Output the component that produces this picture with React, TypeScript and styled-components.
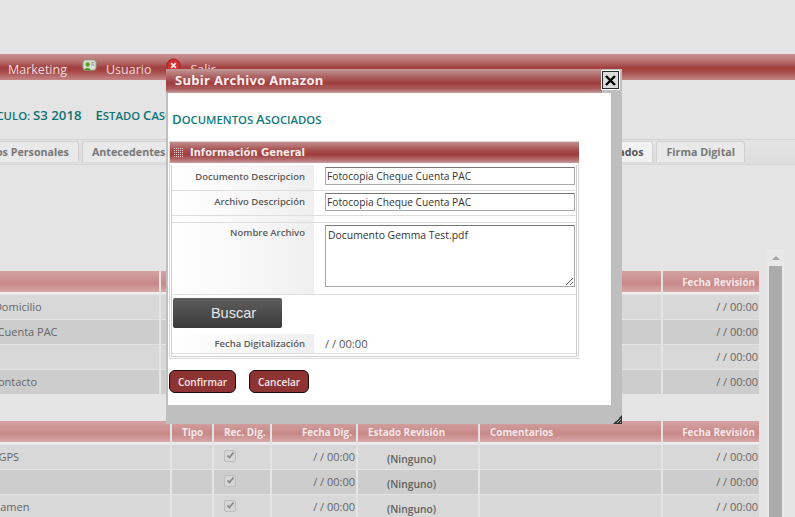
import React from "react";
import styled, { createGlobalStyle } from "styled-components";

const Global = createGlobalStyle`
  html, body { margin: 0; padding: 0; height: 100%; overflow: hidden; background: #e4e4e4; }
  body { font-family: "Open Sans", "Liberation Sans", sans-serif; }
  * { box-sizing: border-box; }
`;

const Page = styled.div`
  position: relative;
  width: 795px;
  height: 517px;
  overflow: hidden;
  background: #e4e4e4;
  padding-top: 54px;
`;

const MenuBar = styled.nav`
  height: 26px;
  display: flex;
  align-items: center;
  padding: 4px 0 0 8px;
  background: linear-gradient(#c99393 0%, #b56d6d 30%, #a23f3f 52%, #a54545 65%, #c58686 100%);
  color: #f0dcdc;
  font-size: 12.5px;
`;

const MenuItem = styled.span`
  display: flex;
  align-items: center;
  margin-right: 15px;
`;

const MenuIcon = styled.svg`
  width: 15px;
  height: 15px;
  margin: -8px 9px 0 0;
`;

const InfoRow = styled.div`
  height: 59px;
  display: flex;
  gap: 14px;
  padding: 26px 0 0 0;
  margin-left: -30px;
  color: #0f7373;
  font-size: 11.3px;
  font-weight: 600;
  text-transform: uppercase;
`;

const InfoText = styled.span`
  white-space: nowrap;
  line-height: 18px;
`;

const Cap = styled.span`
  font-size: 13.2px;
`;

const TabStrip = styled.div`
  height: 26px;
  display: flex;
  align-items: flex-end;
  gap: 3px;
  padding: 0 50px 2px 0;
  margin-left: -33px;
  border-top: 1px solid #d2d2d2;
  border-bottom: 1px solid #d6d6d6;
  background: linear-gradient(#e4e4e4, #dddddd);
`;

const Tab = styled.span<{ $active?: boolean; $push?: boolean }>`
  height: 21px;
  padding: 0 9px;
  display: flex;
  align-items: center;
  white-space: nowrap;
  font-size: 10.7px;
  font-weight: 700;
  color: ${(p) => (p.$active ? "#555" : "#777")};
  background: ${(p) => (p.$active ? "#f2f2f2" : "#e9e9e9")};
  border: 1px solid #d0d0d0;
  border-bottom: 0;
  border-radius: 3px 3px 0 0;
  margin-left: ${(p) => (p.$push ? "auto" : "0")};
`;

const Pane = styled.div`
  display: flex;
  gap: 8px;
  margin-top: 84px;
`;

const Tables = styled.div`
  width: 859px;
  margin-left: -100px;
  display: flex;
  flex-direction: column;
  gap: 27px;
  padding-top: 22px;
  flex: none;
`;

const Grid = styled.div<{ $cols: string }>`
  display: grid;
  grid-template-columns: ${(p) => p.$cols};
  grid-template-rows: 23px;
  column-gap: 2px;
  row-gap: 1px;
  grid-auto-rows: 24px;
  font-size: 11px;
`;

const Head = styled.div<{ $align?: string }>`
  height: 21px;
  display: flex;
  align-items: center;
  justify-content: ${(p) => p.$align || "flex-start"};
  padding: 0 4px 0 10px;
  background: linear-gradient(#d4a3a3, #c88888 60%, #d8a8a8);
  color: #f5e8e8;
  font-weight: 700;
  font-size: 9.9px;
  white-space: nowrap;
  box-shadow: 0 2px 0 #eeeeee;
`;

const Cell = styled.div<{ $dark?: boolean; $align?: string }>`
  display: flex;
  align-items: center;
  justify-content: ${(p) => p.$align || "flex-start"};
  background: ${(p) => (p.$dark ? "#cdcdcd" : "#d8d8d8")};
  color: #666;
  padding: 0 1px 2px 0;
  white-space: nowrap;
  overflow: hidden;
`;

const NameCell = styled(Cell)<{ $pad: number }>`
  padding-left: ${(p) => p.$pad}px;
`;

const Estado = styled.span`
  font-weight: 600;
  color: #606060;
  font-size: 10.3px;
  margin: 6px 0 0 29px;
`;

const Check = styled.span`
  width: 12px;
  height: 12px;
  border-radius: 2px;
  border: 1px solid #bdbdbd;
  background: #d6d6d6;
  display: flex;
  align-items: center;
  justify-content: center;
  margin: -1px 0 0 10px;
`;

const Scrollbar = styled.div`
  width: 17px;
  height: 268px;
  background: #e9e9e9;
  padding: 0 2px;
  flex: none;
`;

const ScrollArrow = styled.div`
  height: 17px;
  display: flex;
  align-items: center;
  justify-content: center;
  &::before {
    content: "";
    border: 4px solid transparent;
    border-top: 0;
    border-bottom: 4px solid #a6a6a6;
  }
`;

const Thumb = styled.div`
  height: 260px;
  background: #ababab;
`;

/* Modal window */
const Modal = styled.section`
  position: absolute;
  left: 166px;
  top: 69px;
  width: 456px;
  height: 355px;
  background: #bfbfbf;
  padding-right: 11px;
  display: flex;
  flex-direction: column;
`;

const TitleBar = styled.header`
  height: 24px;
  margin-right: -11px;
  display: flex;
  align-items: center;
  justify-content: space-between;
  padding: 0 3px 2px 9px;
  background: linear-gradient(90deg, transparent 0, transparent 436px, #bfbfbf 436px),
    linear-gradient(#c39a9a 0%, #ad6464 30%, #9f3e3e 60%, #ad6060 85%, #c9a3a3 100%);
  color: #fbeeee;
`;

const TitleText = styled.span`
  font-size: 13px;
  font-weight: 700;
  letter-spacing: 0.3px;
`;

const CloseBtn = styled.button`
  width: 17px;
  height: 18px;
  padding: 0;
  display: flex;
  align-items: center;
  justify-content: center;
  border: 1px solid #2a2a2a;
  outline: 1px solid #ffffff;
  outline-offset: 0;
  background: #dcdcdc;
`;

const Body = styled.div`
  flex: none;
  height: 312px;
  margin-left: 2px;
  background: #ffffff;
  padding: 0 3px;
`;

const Heading = styled.h2`
  margin: 0;
  padding: 17px 0 0 1px;
  height: 48px;
  color: #0f7a7a;
  font-size: 11.3px;
  font-weight: 600;
  text-transform: uppercase;
  line-height: 18px;
`;

const Fieldset = styled.div`
  width: 410px;
  height: 218px;
  margin-left: -2px;
  padding: 1px;
  border: 1px solid #d9d9d9;
  display: flex;
  flex-direction: column;
`;

const SectionBar = styled.div`
  height: 21px;
  flex: none;
  display: flex;
  align-items: center;
  gap: 7px;
  padding: 0 0 1px 4px;
  margin: -1px -1px 2px;
  width: 409px;
  background: linear-gradient(#c28f8f 0%, #a95454 35%, #9f3c3c 60%, #b46f6f 85%, #cc9e9e 100%);
  color: #f8ecec;
  font-family: "DejaVu Sans", sans-serif;
  font-size: 10px;
  font-weight: 700;
`;

const Dots = styled.svg`
  width: 9px;
  height: 9px;
`;

const FormInner = styled.div`
  flex: 1;
  border: 1px solid #cfcfcf;
  border-top: 0;
  display: flex;
  flex-direction: column;
`;

const FormRow = styled.div<{ $h: number }>`
  height: ${(p) => p.$h}px;
  flex: none;
  display: flex;
  border-bottom: 1px solid #dedede;
`;

const Label = styled.div<{ $top?: number }>`
  width: 142px;
  flex: none;
  text-align: right;
  padding: ${(p) => p.$top ?? 2}px 9px 0 0;
  font-size: 9.5px;
  font-weight: 600;
  color: #5c5c5c;
  background: linear-gradient(90deg, #ffffff 0%, #f8f8f8 50%, #efefef 100%);
  line-height: 15px;
`;

const Value = styled.div`
  flex: 1;
  padding: 2px 0 0 11px;
  font-size: 11.2px;
  line-height: 15px;
  color: #555;
`;

const TextInput = styled.input`
  display: block;
  width: 250px;
  height: 18px;
  padding: 0 1px;
  border: 1px solid #a8a8a8;
  border-top-color: #777;
  font: 10.2px "Open Sans", sans-serif;
  color: #333;
  outline: none;
`;

const TextArea = styled.textarea`
  display: block;
  width: 250px;
  height: 62px;
  padding: 2px 2px;
  border: 1px solid #a8a8a8;
  border-top-color: #777;
  border-radius: 0;
  font: 10.4px "Open Sans", sans-serif;
  color: #333;
  outline: none;
`;

const BuscarRow = styled.div`
  height: 39px;
  flex: none;
  padding: 3px 0 0 1px;
`;

const Buscar = styled.button`
  display: block;
  width: 109px;
  height: 30px;
  padding: 0 0 0 12px;
  border: 0;
  border-radius: 2px;
  background: linear-gradient(#5e5e5e, #3a3a3a);
  color: #e8e8e8;
  font: 14.5px "Liberation Sans", sans-serif;
`;

const Actions = styled.div`
  display: flex;
  gap: 13px;
  margin: 11px 0 0 -2px;
`;

const ActionBtn = styled.button<{ $w: number }>`
  width: ${(p) => p.$w}px;
  height: 23px;
  border: 1px solid #1d0c0c;
  border-radius: 6px;
  background: #8e3333;
  color: #f6e6e6;
  font: 600 10px "Open Sans", sans-serif;
  padding: 0;
`;

const Grip = styled.svg`
  position: absolute;
  right: 0;
  bottom: 0;
  width: 9px;
  height: 9px;
`;

const T1 = "259px 500px 96px";
const T2 = "270px 40px 56px 84px 120px 181px 96px";

const rows1 = [
  { name: "Comprobante de Domicilio", pad: 4 },
  { name: "Fotocopia Cheque Cuenta PAC", pad: 2 },
  { name: "", pad: 0 },
  { name: "Información de Contacto", pad: 10 },
];
const rows2 = [
  { name: "Certificación GPS", pad: 32 },
  { name: "", pad: 0 },
  { name: "Certificado Examen", pad: 30 },
];

export default function App() {
  return (
    <Page>
      <Global />
      <MenuBar>
        <MenuItem>Marketing</MenuItem>
        <MenuItem>
          <MenuIcon viewBox="0 0 16 16">
            <rect x="1" y="2" width="14" height="11" rx="3" fill="#d9dfcf" stroke="#8d9a80" />
            <circle cx="6" cy="7" r="2.4" fill="#5da02d" />
            <path d="M2.5 13c.5-3 6-3 7 0z" fill="#4d8f20" />
            <path d="M10 5h3M10 7.5h3" stroke="#7a8a9a" />
          </MenuIcon>
          Usuario
        </MenuItem>
        <MenuItem>
          <MenuIcon viewBox="0 0 16 16">
            <circle cx="8" cy="8" r="7" fill="#d32f2f" stroke="#a61c1c" />
            <path d="M5.5 5.5l5 5M10.5 5.5l-5 5" stroke="#f4e5e5" strokeWidth="2" />
          </MenuIcon>
          Salir
        </MenuItem>
      </MenuBar>
      <InfoRow>
        <InfoText><Cap>V</Cap>ehículo: <Cap>S3 2018</Cap></InfoText>
        <InfoText><Cap>E</Cap>stado <Cap>C</Cap>asco</InfoText>
      </InfoRow>
      <TabStrip>
        <Tab>Datos Personales</Tab>
        <Tab>Antecedentes</Tab>
        <Tab $active $push>Documentos Digitalizados</Tab>
        <Tab>Firma Digital</Tab>
      </TabStrip>
      <Pane>
        <Tables>
          <Grid $cols={T1}>
            <Head />
            <Head />
            <Head $align="flex-end">Fecha Revisión</Head>
            {rows1.map((r, i) => (
              <React.Fragment key={i}>
                <NameCell $pad={r.pad} $dark={i % 2 === 1}>{r.name}</NameCell>
                <Cell $dark={i % 2 === 1} />
                <Cell $dark={i % 2 === 1} $align="flex-end">/ / 00:00</Cell>
              </React.Fragment>
            ))}
          </Grid>
          <Grid $cols={T2}>
            <Head />
            <Head>Tipo</Head>
            <Head>Rec. Dig.</Head>
            <Head $align="flex-end">Fecha Dig.</Head>
            <Head>Estado Revisión</Head>
            <Head>Comentarios</Head>
            <Head $align="flex-end">Fecha Revisión</Head>
            {rows2.map((r, i) => (
              <React.Fragment key={i}>
                <NameCell $pad={r.pad} $dark={i % 2 === 1}>{r.name}</NameCell>
                <Cell $dark={i % 2 === 1} />
                <Cell $dark={i % 2 === 1}>
                  <Check>
                    <svg width="9" height="9" viewBox="0 0 9 9">
                      <path d="M1.5 4.5l2 2 4-5" stroke="#8a8a8a" strokeWidth="1.8" fill="none" />
                    </svg>
                  </Check>
                </Cell>
                <Cell $dark={i % 2 === 1} $align="flex-end">/ / 00:00</Cell>
                <Cell $dark={i % 2 === 1}><Estado>(Ninguno)</Estado></Cell>
                <Cell $dark={i % 2 === 1} />
                <Cell $dark={i % 2 === 1} $align="flex-end">/ / 00:00</Cell>
              </React.Fragment>
            ))}
          </Grid>
        </Tables>
        <Scrollbar>
          <ScrollArrow />
          <Thumb />
        </Scrollbar>
      </Pane>

      <Modal>
        <TitleBar>
          <TitleText>Subir Archivo Amazon</TitleText>
          <CloseBtn aria-label="Cerrar">
            <svg width="13" height="13" viewBox="0 0 13 13">
              <path d="M2 2l9 9M11 2l-9 9" stroke="#000" strokeWidth="2.4" />
            </svg>
          </CloseBtn>
        </TitleBar>
        <Body>
          <Heading><Cap>D</Cap>ocumentos <Cap>A</Cap>sociados</Heading>
          <Fieldset>
            <SectionBar>
              <Dots viewBox="0 0 9 9">
                {[0, 2, 4, 6, 8].flatMap((x) =>
                  [0, 2, 4, 6, 8].map((y) => (
                    <rect key={`${x}-${y}`} x={x} y={y} width="1" height="1" fill="#e8cfcf" />
                  ))
                )}
              </Dots>
              Información General
            </SectionBar>
            <FormInner>
              <FormRow $h={26}>
                <Label $top={4}>Documento Descripcion</Label>
                <Value><TextInput readOnly value="Fotocopia Cheque Cuenta PAC" /></Value>
              </FormRow>
              <FormRow $h={25}>
                <Label $top={3}>Archivo Descripción</Label>
                <Value><TextInput readOnly value="Fotocopia Cheque Cuenta PAC" /></Value>
              </FormRow>
              <FormRow $h={7}>
                <Label />
                <Value />
              </FormRow>
              <FormRow $h={72}>
                <Label>Nombre Archivo</Label>
                <Value><TextArea readOnly value="Documento Gemma Test.pdf" /></Value>
              </FormRow>
              <BuscarRow><Buscar>Buscar</Buscar></BuscarRow>
              <FormRow $h={20}>
                <Label>Fecha Digitalización</Label>
                <Value>/ / 00:00</Value>
              </FormRow>
            </FormInner>
          </Fieldset>
          <Actions>
            <ActionBtn $w={67}>Confirmar</ActionBtn>
            <ActionBtn $w={60}>Cancelar</ActionBtn>
          </Actions>
        </Body>
        <Grip viewBox="0 0 9 9">
          <path d="M9 0L0 9h9z" fill="#333" />
          <path d="M6 3L3 6M8 4L4 8M8 7L7 8" stroke="#bfbfbf" />
        </Grip>
      </Modal>
    </Page>
  );
}
